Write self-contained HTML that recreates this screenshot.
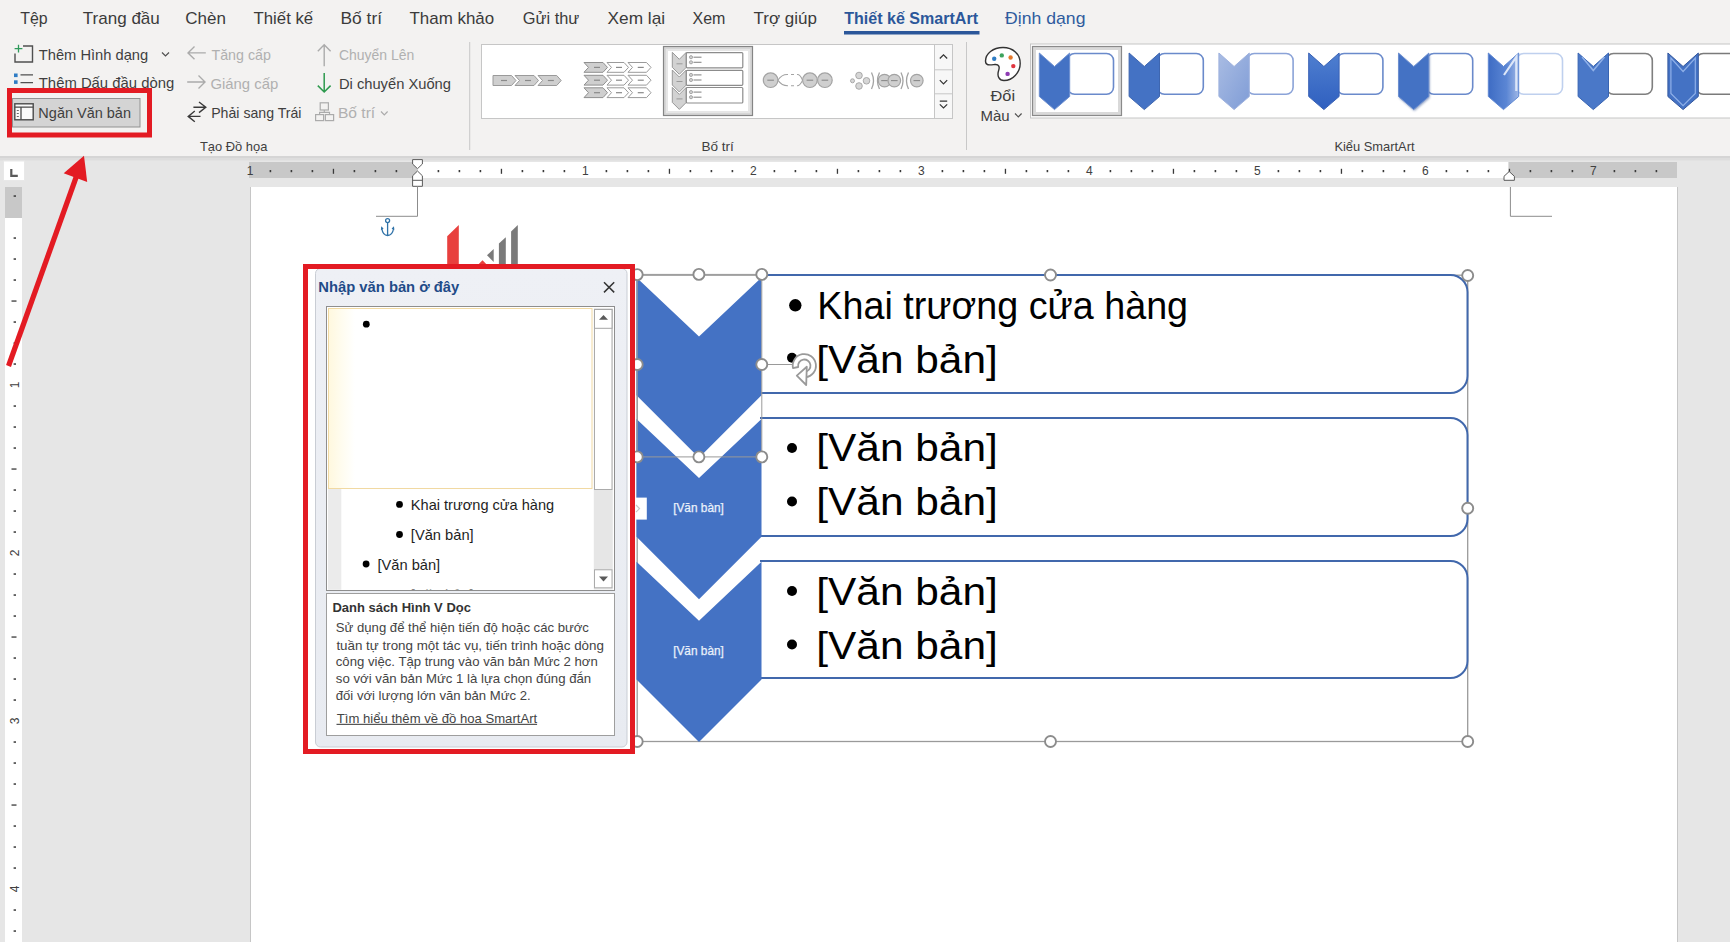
<!DOCTYPE html>
<html><head><meta charset="utf-8">
<style>
html,body{margin:0;padding:0;}
body{width:1730px;height:942px;overflow:hidden;background:#E6E6E6;position:relative;font-family:"Liberation Sans",sans-serif;}
svg{position:absolute;left:0;top:0;}
text{font-family:"Liberation Sans",sans-serif;}
</style></head><body>
<svg width="1730" height="942" viewBox="0 0 1730 942">
<!-- RIB -->
<rect x="0" y="0" width="1730" height="156" fill="#F3F2F1"/>
<g font-size="17" fill="#3B3B3B">
<text x="20.30" y="24" textLength="27.40" lengthAdjust="spacingAndGlyphs" >Tệp</text>
<text x="82.80" y="24" textLength="77.00" lengthAdjust="spacingAndGlyphs" >Trang đầu</text>
<text x="185.30" y="24" textLength="40.70" lengthAdjust="spacingAndGlyphs" >Chèn</text>
<text x="253.50" y="24" textLength="59.70" lengthAdjust="spacingAndGlyphs" >Thiết kế</text>
<text x="340.50" y="24" textLength="41.50" lengthAdjust="spacingAndGlyphs" >Bố trí</text>
<text x="409.50" y="24" textLength="84.60" lengthAdjust="spacingAndGlyphs" >Tham khảo</text>
<text x="522.80" y="24" textLength="56.50" lengthAdjust="spacingAndGlyphs" >Gửi thư</text>
<text x="607.60" y="24" textLength="57.50" lengthAdjust="spacingAndGlyphs" >Xem lại</text>
<text x="692.50" y="24" textLength="32.90" lengthAdjust="spacingAndGlyphs" >Xem</text>
<text x="753.60" y="24" textLength="63.30" lengthAdjust="spacingAndGlyphs" >Trợ giúp</text>
<text x="844.20" y="24" textLength="133.80" lengthAdjust="spacingAndGlyphs" fill="#2B579A" font-weight="bold">Thiết kế SmartArt</text>
<text x="1005.10" y="24" textLength="80.40" lengthAdjust="spacingAndGlyphs" fill="#2F5C9E">Định dạng</text>
</g>
<rect x="844" y="31" width="135.5" height="3.5" fill="#2B579A"/>
<g font-size="15" fill="#3F3F3F">
<path d="M23 46 H32.5 V62 H15 V53.5" fill="none" stroke="#505050" stroke-width="1.4"/>
<path d="M18.5 44.8 V52.6 M14.6 48.7 H22.4" stroke="#2E9A5B" stroke-width="1.3"/>
<text x="38.80" y="59.7" textLength="109.40" lengthAdjust="spacingAndGlyphs" >Thêm Hình dạng</text>
<path d="M162 52.5 L165.5 56 L169 52.5" fill="none" stroke="#505050" stroke-width="1.2"/>
<rect x="14" y="73.5" width="3.6" height="3.6" fill="#2F7CC4"/>
<rect x="14" y="80.3" width="3.6" height="3.6" fill="#2F7CC4"/>
<path d="M20.5 74.9 H33 M20.5 82.6 H33" stroke="#505050" stroke-width="1.4"/>
<text x="38.80" y="88" textLength="135.40" lengthAdjust="spacingAndGlyphs" >Thêm Dấu đầu dòng</text>
<rect x="12.5" y="98.5" width="127.5" height="28.5" fill="#D4D4D4" stroke="#929292" stroke-width="1"/>
<rect x="14.8" y="103.8" width="18.4" height="16" fill="#FAFAFA" stroke="#4A4A4A" stroke-width="1.4"/>
<path d="M14.8 107.2 H33.2 M21 107.2 V119.8" stroke="#4A4A4A" stroke-width="1.3"/>
<path d="M16.8 110.5 H18.8 M16.8 113.5 H18.8 M16.8 116.5 H18.8" stroke="#6A6A6A" stroke-width="1.2"/>
<text x="38.36" y="118" textLength="92.64" lengthAdjust="spacingAndGlyphs" >Ngăn Văn bản</text>
</g>
<g font-size="15" fill="#B0B0B0">
<path d="M205.8 52.9 H188 M194.5 46.5 L188 52.9 L194.5 59.3" fill="none" stroke="#ABABAB" stroke-width="1.4"/>
<text x="211.50" y="59.6" textLength="59.40" lengthAdjust="spacingAndGlyphs" >Tăng cấp</text>
<path d="M187.2 82 H205 M198.5 75.6 L205 82 L198.5 88.4" fill="none" stroke="#ABABAB" stroke-width="1.4"/>
<text x="210.50" y="88.7" textLength="67.70" lengthAdjust="spacingAndGlyphs" >Giáng cấp</text>
<path d="M193.4 107.3 H205.8 M199 102 L205.8 107.3 L199 112.6 M200.5 116.4 H188.2 M194.8 111 L188.2 116.4 L194.8 121.8" fill="none" stroke="#3A3A3A" stroke-width="1.4"/>
<text x="211.20" y="117.8" textLength="90.28" lengthAdjust="spacingAndGlyphs" fill="#3F3F3F">Phải sang Trái</text>
<path d="M324.2 66.3 V45 M317.8 51.2 L324.2 44.8 L330.6 51.2" fill="none" stroke="#ABABAB" stroke-width="1.4"/>
<text x="338.90" y="59.6" textLength="75.30" lengthAdjust="spacingAndGlyphs" >Chuyển Lên</text>
<path d="M324.2 73 V92 M317.8 85.6 L324.2 92 L330.6 85.6" fill="none" stroke="#2E9A4E" stroke-width="1.5"/>
<text x="338.90" y="88.7" textLength="112.10" lengthAdjust="spacingAndGlyphs" fill="#3F3F3F">Di chuyển Xuống</text>
<rect x="320.2" y="102.8" width="8.2" height="7.2" fill="none" stroke="#ABABAB" stroke-width="1.2"/>
<rect x="315.6" y="114.6" width="8" height="6" fill="none" stroke="#ABABAB" stroke-width="1.2"/>
<rect x="325.4" y="114.6" width="8.2" height="6" fill="none" stroke="#ABABAB" stroke-width="1.2"/>
<path d="M324.3 110 V112.3 M319.6 114.6 V112.3 H329.5 V114.6" fill="none" stroke="#ABABAB" stroke-width="1.2"/>
<text x="337.90" y="117.8" textLength="37.30" lengthAdjust="spacingAndGlyphs" >Bố trí</text>
<path d="M381 111.5 L384.3 114.8 L387.6 111.5" fill="none" stroke="#ABABAB" stroke-width="1.2"/>
</g>
<text x="199.90" y="150.9" textLength="67.50" lengthAdjust="spacingAndGlyphs" font-size="13" fill="#3F3F3F">Tạo Đồ họa</text>
<rect x="469.2" y="42" width="1" height="108" fill="#C8C8C8"/>
<!-- /RIB -->
<!-- GALLERY -->
<rect x="481.5" y="44.5" width="471" height="74" fill="#FFFFFF" stroke="#C6C6C6" stroke-width="1"/>
<rect x="934.5" y="44.5" width="18" height="74" fill="#F7F7F7" stroke="#C6C6C6" stroke-width="1"/>
<path d="M934.5 69.8 H952.5 M934.5 93.8 H952.5" stroke="#C6C6C6" stroke-width="1"/>
<path d="M939.8 58.5 L943.5 54.8 L947.2 58.5" fill="none" stroke="#333" stroke-width="1.2"/>
<path d="M939.8 80.2 L943.5 83.9 L947.2 80.2" fill="none" stroke="#333" stroke-width="1.2"/>
<path d="M939.8 101.2 H947.2 M939.8 104.3 L943.5 108 L947.2 104.3" fill="none" stroke="#333" stroke-width="1.2"/>
<path d="M493 75.5 H511.5 L516 80.5 L511.5 85.5 H493 Z" fill="#CFCFCF" stroke="#9A9A9A" stroke-width="1"/><path d="M501.0 80.5 h6" stroke="#8A8A8A" stroke-width="1.2"/>
<path d="M515.0 75.5 H534.0 L538.5 80.5 L534.0 85.5 H515.0 L519.5 80.5 Z" fill="#CFCFCF" stroke="#9A9A9A" stroke-width="1"/><path d="M525.0 80.5 h6" stroke="#8A8A8A" stroke-width="1.2"/>
<path d="M538.0 75.5 H556.7 L561.2 80.5 L556.7 85.5 H538.0 L542.5 80.5 Z" fill="#CFCFCF" stroke="#9A9A9A" stroke-width="1"/><path d="M547.85 80.5 h6" stroke="#8A8A8A" stroke-width="1.2"/>
<path d="M584.0 62.5 H603.0 L607.5 67.4 L603.0 72.3 H584.0 L588.5 67.4 Z" fill="#CFCFCF" stroke="#8F8F8F" stroke-width="1"/><path d="M594.0 67.4 h6" stroke="#8A8A8A" stroke-width="1.2"/>
<path d="M607.0 62.5 H624.0 L628.5 67.4 L624.0 72.3 H607.0 L611.5 67.4 Z" fill="#FFFFFF" stroke="#9A9A9A" stroke-width="1"/><path d="M616.0 67.4 h6" stroke="#8A8A8A" stroke-width="1.2"/>
<path d="M628.0 62.5 H646.5 L651.0 67.4 L646.5 72.3 H628.0 L632.5 67.4 Z" fill="#FFFFFF" stroke="#9A9A9A" stroke-width="1"/><path d="M637.75 67.4 h6" stroke="#8A8A8A" stroke-width="1.2"/>
<path d="M584.0 75.3 H603.0 L607.5 80.2 L603.0 85.1 H584.0 L588.5 80.2 Z" fill="#CFCFCF" stroke="#8F8F8F" stroke-width="1"/><path d="M594.0 80.2 h6" stroke="#8A8A8A" stroke-width="1.2"/>
<path d="M607.0 75.3 H624.0 L628.5 80.2 L624.0 85.1 H607.0 L611.5 80.2 Z" fill="#FFFFFF" stroke="#9A9A9A" stroke-width="1"/><path d="M616.0 80.2 h6" stroke="#8A8A8A" stroke-width="1.2"/>
<path d="M628.0 75.3 H646.5 L651.0 80.2 L646.5 85.1 H628.0 L632.5 80.2 Z" fill="#FFFFFF" stroke="#9A9A9A" stroke-width="1"/><path d="M637.75 80.2 h6" stroke="#8A8A8A" stroke-width="1.2"/>
<path d="M584.0 87.8 H603.0 L607.5 92.7 L603.0 97.6 H584.0 L588.5 92.7 Z" fill="#CFCFCF" stroke="#8F8F8F" stroke-width="1"/><path d="M594.0 92.7 h6" stroke="#8A8A8A" stroke-width="1.2"/>
<path d="M607.0 87.8 H624.0 L628.5 92.7 L624.0 97.6 H607.0 L611.5 92.7 Z" fill="#FFFFFF" stroke="#9A9A9A" stroke-width="1"/><path d="M616.0 92.7 h6" stroke="#8A8A8A" stroke-width="1.2"/>
<path d="M628.0 87.8 H646.5 L651.0 92.7 L646.5 97.6 H628.0 L632.5 92.7 Z" fill="#FFFFFF" stroke="#9A9A9A" stroke-width="1"/><path d="M637.75 92.7 h6" stroke="#8A8A8A" stroke-width="1.2"/>
<rect x="663.5" y="46.5" width="89" height="69" fill="#D6D6D6" stroke="#858585" stroke-width="1.2"/>
<rect x="668" y="51" width="80" height="60" fill="#FFFFFF" />
<rect x="667" y="50" width="82" height="62" fill="none" stroke="#E6E6E6" stroke-width="2"/>
<path d="M672.3 52.3 L679.3 59.3 L686.3 52.3 V67.3 L679.3 74.3 L672.3 67.3 Z" fill="#D2D2D2" stroke="#999" stroke-width="1"/>
<path d="M676.5 63.8 h6" stroke="#9A9A9A" stroke-width="1"/>
<rect x="686.3" y="52.6" width="56.5" height="15.199999999999996" rx="1" fill="#FFF" stroke="#8C8C8C" stroke-width="1.2"/>
<circle cx="691" cy="57.2" r="1.6" fill="#CFCFCF" stroke="#999" stroke-width="0.8"/><path d="M693.5 57.2 h8" stroke="#8A8A8A" stroke-width="1.1"/>
<circle cx="691" cy="62.300000000000004" r="1.6" fill="#CFCFCF" stroke="#999" stroke-width="0.8"/><path d="M693.5 62.300000000000004 h8" stroke="#8A8A8A" stroke-width="1.1"/>
<path d="M672.3 70.0 L679.3 77.0 L686.3 70.0 V85.0 L679.3 92.0 L672.3 85.0 Z" fill="#D2D2D2" stroke="#999" stroke-width="1"/>
<path d="M676.5 81.5 h6" stroke="#9A9A9A" stroke-width="1"/>
<rect x="686.3" y="70.3" width="56.5" height="15.0" rx="1" fill="#FFF" stroke="#8C8C8C" stroke-width="1.2"/>
<circle cx="691" cy="74.89999999999999" r="1.6" fill="#CFCFCF" stroke="#999" stroke-width="0.8"/><path d="M693.5 74.89999999999999 h8" stroke="#8A8A8A" stroke-width="1.1"/>
<circle cx="691" cy="79.99999999999999" r="1.6" fill="#CFCFCF" stroke="#999" stroke-width="0.8"/><path d="M693.5 79.99999999999999 h8" stroke="#8A8A8A" stroke-width="1.1"/>
<path d="M672.3 87.4 L679.3 94.4 L686.3 87.4 V102.4 L679.3 109.4 L672.3 102.4 Z" fill="#D2D2D2" stroke="#999" stroke-width="1"/>
<path d="M676.5 98.9 h6" stroke="#9A9A9A" stroke-width="1"/>
<rect x="686.3" y="87.5" width="56.5" height="15.5" rx="1" fill="#FFF" stroke="#8C8C8C" stroke-width="1.2"/>
<circle cx="691" cy="92.1" r="1.6" fill="#CFCFCF" stroke="#999" stroke-width="0.8"/><path d="M693.5 92.1 h8" stroke="#8A8A8A" stroke-width="1.1"/>
<circle cx="691" cy="97.19999999999999" r="1.6" fill="#CFCFCF" stroke="#999" stroke-width="0.8"/><path d="M693.5 97.19999999999999 h8" stroke="#8A8A8A" stroke-width="1.1"/>
<circle cx="770.6" cy="80.2" r="7.3" fill="#CFCFCF" stroke="#A3A3A3" stroke-width="1.2"/><path d="M767.3000000000001 80.2 h6.6" stroke="#8A8A8A" stroke-width="1.1"/>
<path d="M778 80 Q782 74 788 74.5 M778 80.4 Q782 86 788 85.8 M791 74.5 h3 M791 85.8 h3 M797 74.5 Q800 74 802.5 80 M797 85.8 Q800 86 802.5 80.4" fill="none" stroke="#A3A3A3" stroke-width="1.1"/>
<circle cx="809.9" cy="80.2" r="7.3" fill="#CFCFCF" stroke="#A3A3A3" stroke-width="1.2"/><path d="M806.6 80.2 h6.6" stroke="#8A8A8A" stroke-width="1.1"/>
<circle cx="824.9" cy="80.2" r="7.3" fill="#CFCFCF" stroke="#A3A3A3" stroke-width="1.2"/><path d="M821.6 80.2 h6.6" stroke="#8A8A8A" stroke-width="1.1"/>
<circle cx="852.5" cy="80.8" r="2" fill="#D6D6D6" stroke="#A3A3A3" stroke-width="0.9"/>
<circle cx="859" cy="75.5" r="3.3" fill="#D6D6D6" stroke="#A3A3A3" stroke-width="0.9"/>
<circle cx="859" cy="86" r="3.3" fill="#D6D6D6" stroke="#A3A3A3" stroke-width="0.9"/>
<circle cx="866.5" cy="80.8" r="3.3" fill="#D6D6D6" stroke="#A3A3A3" stroke-width="0.9"/>
<path d="M871.5 72.5 Q875.5 80.8 871.5 89 M879.5 72.5 Q875.5 80.8 879.5 89 M901 72.5 Q905 80.8 901 89 M908.5 72.5 Q904.5 80.8 908.5 89" fill="none" stroke="#A3A3A3" stroke-width="1.3"/>
<circle cx="884.5" cy="80.6" r="6.3" fill="#CFCFCF" stroke="#A3A3A3" stroke-width="1.2"/><path d="M881.2 80.6 h6.6" stroke="#8A8A8A" stroke-width="1.1"/>
<circle cx="894.3" cy="80.6" r="6.3" fill="#CFCFCF" stroke="#A3A3A3" stroke-width="1.2"/><path d="M891.0 80.6 h6.6" stroke="#8A8A8A" stroke-width="1.1"/>
<circle cx="916.8" cy="80.6" r="6.3" fill="#CFCFCF" stroke="#A3A3A3" stroke-width="1.2"/><path d="M913.5 80.6 h6.6" stroke="#8A8A8A" stroke-width="1.1"/>
<text x="701.40" y="151" textLength="32.40" lengthAdjust="spacingAndGlyphs" font-size="13" fill="#3F3F3F">Bố trí</text>
<rect x="966" y="42" width="1" height="108" fill="#C8C8C8"/>
<path d="M1003 47.5 C993 47.5 985.5 53.5 985.5 61 C985.5 66 990 65 995 64.5 C999 64.2 1000 67 998.5 71 C997 76 999 80.5 1004 80.5 C1013 80.5 1020.2 72 1020.2 63.5 C1020.2 54 1013 47.5 1003 47.5 Z" fill="#FFFFFF" stroke="#333" stroke-width="1.4"/>
<circle cx="994.2" cy="58.8" r="2.2" fill="#2F7DC4"/><circle cx="1001.8" cy="55.4" r="2.2" fill="#3DA35D"/><circle cx="1010.6" cy="57.5" r="2.2" fill="#E5792C"/><circle cx="1013.3" cy="66.1" r="2.2" fill="#E0353F"/><circle cx="1007.6" cy="73.9" r="2.2" fill="#8E3CB3"/>
<text x="990.52" y="100.7" textLength="24.60" lengthAdjust="spacingAndGlyphs" font-size="15" fill="#3F3F3F">Đổi</text>
<text x="980.40" y="121" textLength="29.20" lengthAdjust="spacingAndGlyphs" font-size="15" fill="#3F3F3F">Màu</text>
<path d="M1015 113.5 L1018.3 116.8 L1021.6 113.5" fill="none" stroke="#505050" stroke-width="1.2"/>
<rect x="1030.5" y="44" width="720" height="74" fill="#FFFFFF" stroke="#C6C6C6" stroke-width="1"/>
<rect x="1032.5" y="46.5" width="89" height="69" fill="#D9D9D9" stroke="#8A8A8A" stroke-width="1.2"/>
<rect x="1036" y="50" width="82" height="62" fill="#FFFFFF"/>
<defs><linearGradient id="lg3" x1="0" y1="0" x2="1" y2="1"><stop offset="0" stop-color="#A9BCE3"/><stop offset="1" stop-color="#7F9CD6"/></linearGradient><linearGradient id="lg4" x1="0" y1="0" x2="0" y2="1"><stop offset="0" stop-color="#4F7FD0"/><stop offset="1" stop-color="#2F5FBF"/></linearGradient><linearGradient id="lg6" x1="0" y1="0" x2="1" y2="0"><stop offset="0" stop-color="#3E6CC4"/><stop offset="0.6" stop-color="#5B86D4"/><stop offset="1" stop-color="#9FB7E6"/></linearGradient><filter id="blur1"><feGaussianBlur stdDeviation="1.2"/></filter></defs>
<rect x="1067.7" y="53.5" width="45.800000000000004" height="40.8" rx="7" fill="#FFFFFF" stroke="#6A8ACB" stroke-width="1.6"/>
<path d="M1039.3 53 L1054.5 66.5 L1069.7 53 V96.5 L1054.5 109.6 L1039.3 96.5 Z" fill="#4472C4" stroke="#6D8FD0" stroke-width="1"/>
<rect x="1157.5" y="53.5" width="45.800000000000004" height="40.8" rx="7" fill="#FFFFFF" stroke="#6A8ACB" stroke-width="1.6"/>
<path d="M1129.1 53 L1144.3 66.5 L1159.5 53 V96.5 L1144.3 109.6 L1129.1 96.5 Z" fill="#4472C4" stroke="#3E66B0" stroke-width="1"/>
<rect x="1247.3" y="53.5" width="45.800000000000004" height="40.8" rx="7" fill="#FFFFFF" stroke="#8BA3D8" stroke-width="1.6"/>
<path d="M1218.8999999999999 53 L1234.1 66.5 L1249.3 53 V96.5 L1234.1 109.6 L1218.8999999999999 96.5 Z" fill="url(#lg3)" stroke="#9FB2DE" stroke-width="1"/>
<rect x="1337.1" y="53.5" width="45.800000000000004" height="40.8" rx="7" fill="#FFFFFF" stroke="#6A8ACB" stroke-width="1.6"/>
<path d="M1308.6999999999998 53 L1323.8999999999999 66.5 L1339.1 53 V96.5 L1323.8999999999999 109.6 L1308.6999999999998 96.5 Z" fill="url(#lg4)" stroke="#3A62B5" stroke-width="1"/>
<rect x="1426.9" y="53.5" width="45.800000000000004" height="40.8" rx="7" fill="#FFFFFF" stroke="#6A8ACB" stroke-width="1.6"/>
<path d="M1398.5 53 L1413.7 66.5 L1428.9 53 V96.5 L1413.7 109.6 L1398.5 96.5 Z" fill="#2E4E8E" opacity="0.5" transform="translate(0.8,1.5)" filter="url(#blur1)"/>
<path d="M1398.5 53 L1413.7 66.5 L1428.9 53 V96.5 L1413.7 109.6 L1398.5 96.5 Z" fill="#4472C4" stroke="#6D8FD0" stroke-width="1"/>
<rect x="1516.7" y="53.5" width="45.800000000000004" height="40.8" rx="7" fill="#FFFFFF" stroke="#BFD0EE" stroke-width="1.6"/>
<path d="M1488.3 53 L1503.5 66.5 L1518.7 53 V96.5 L1503.5 109.6 L1488.3 96.5 Z" fill="url(#lg6)" stroke="#5F88D3" stroke-width="1"/>
<path d="M1504.0 75 L1516.3 57 L1516.3 91" fill="none" stroke="#DDE7F8" stroke-width="2.2"/>
<rect x="1606.5" y="53.5" width="45.800000000000004" height="40.8" rx="7" fill="#FFFFFF" stroke="#7F7F7F" stroke-width="1.6"/>
<path d="M1578.1 53 L1593.3 66.5 L1608.5 53 V96.5 L1593.3 109.6 L1578.1 96.5 Z" fill="#4A78C8" stroke="#3864B2" stroke-width="1"/>
<path d="M1582.1 57 L1593.3 70.5 L1604.5 57" fill="none" stroke="#8FB0E8" stroke-width="1.5"/>
<rect x="1696.3000000000002" y="53.5" width="45.800000000000004" height="40.8" rx="7" fill="#FFFFFF" stroke="#7A7A7A" stroke-width="1.6"/>
<path d="M1667.9 53 L1683.1000000000001 66.5 L1698.3000000000002 53 V96.5 L1683.1000000000001 109.6 L1667.9 96.5 Z" fill="#4472C4" stroke="#34589E" stroke-width="1"/>
<path d="M1670.9 58 L1683.1000000000001 71.5 L1695.3000000000002 58 V93.5 L1683.1000000000001 105.6 L1670.9 93.5 Z" fill="none" stroke="#8FB0E8" stroke-width="1.2"/>
<text x="1334.40" y="151.3" textLength="80.12" lengthAdjust="spacingAndGlyphs" font-size="13" fill="#3F3F3F">Kiểu SmartArt</text>
<!-- /GALLERY -->
<!-- DOC -->
<rect x="0" y="156" width="1730" height="2" fill="#D5D5D5"/>
<rect x="0" y="158" width="1730" height="2" fill="#DDDDDD"/>
<rect x="0" y="160" width="1730" height="1" fill="#E2E2E2"/>
<rect x="251" y="187" width="1426" height="760" fill="#FFFFFF"/>
<rect x="250" y="187" width="1" height="760" fill="#C6C6C6"/>
<rect x="1677" y="187" width="1" height="760" fill="#C6C6C6"/>
<rect x="249" y="162" width="1428" height="16" fill="#C8C8C8"/>
<rect x="417.4" y="162" width="1091" height="16" fill="#FFFFFF"/>
<rect x="269.6" y="170" width="1.6" height="2.2" fill="#3A3A3A"/>
<rect x="290.6" y="170" width="1.6" height="2.2" fill="#3A3A3A"/>
<rect x="311.6" y="170" width="1.6" height="2.2" fill="#3A3A3A"/>
<rect x="332.8" y="168.8" width="1.3" height="5" fill="#3A3A3A"/>
<rect x="353.6" y="170" width="1.6" height="2.2" fill="#3A3A3A"/>
<rect x="374.6" y="170" width="1.6" height="2.2" fill="#3A3A3A"/>
<rect x="395.6" y="170" width="1.6" height="2.2" fill="#3A3A3A"/>
<rect x="437.6" y="170" width="1.6" height="2.2" fill="#3A3A3A"/>
<rect x="458.6" y="170" width="1.6" height="2.2" fill="#3A3A3A"/>
<rect x="479.6" y="170" width="1.6" height="2.2" fill="#3A3A3A"/>
<rect x="500.8" y="168.8" width="1.3" height="5" fill="#3A3A3A"/>
<rect x="521.6" y="170" width="1.6" height="2.2" fill="#3A3A3A"/>
<rect x="542.6" y="170" width="1.6" height="2.2" fill="#3A3A3A"/>
<rect x="563.6" y="170" width="1.6" height="2.2" fill="#3A3A3A"/>
<rect x="605.6" y="170" width="1.6" height="2.2" fill="#3A3A3A"/>
<rect x="626.6" y="170" width="1.6" height="2.2" fill="#3A3A3A"/>
<rect x="647.6" y="170" width="1.6" height="2.2" fill="#3A3A3A"/>
<rect x="668.8" y="168.8" width="1.3" height="5" fill="#3A3A3A"/>
<rect x="689.6" y="170" width="1.6" height="2.2" fill="#3A3A3A"/>
<rect x="710.6" y="170" width="1.6" height="2.2" fill="#3A3A3A"/>
<rect x="731.6" y="170" width="1.6" height="2.2" fill="#3A3A3A"/>
<rect x="773.6" y="170" width="1.6" height="2.2" fill="#3A3A3A"/>
<rect x="794.6" y="170" width="1.6" height="2.2" fill="#3A3A3A"/>
<rect x="815.6" y="170" width="1.6" height="2.2" fill="#3A3A3A"/>
<rect x="836.8" y="168.8" width="1.3" height="5" fill="#3A3A3A"/>
<rect x="857.6" y="170" width="1.6" height="2.2" fill="#3A3A3A"/>
<rect x="878.6" y="170" width="1.6" height="2.2" fill="#3A3A3A"/>
<rect x="899.6" y="170" width="1.6" height="2.2" fill="#3A3A3A"/>
<rect x="941.6" y="170" width="1.6" height="2.2" fill="#3A3A3A"/>
<rect x="962.6" y="170" width="1.6" height="2.2" fill="#3A3A3A"/>
<rect x="983.6" y="170" width="1.6" height="2.2" fill="#3A3A3A"/>
<rect x="1004.8" y="168.8" width="1.3" height="5" fill="#3A3A3A"/>
<rect x="1025.6" y="170" width="1.6" height="2.2" fill="#3A3A3A"/>
<rect x="1046.6" y="170" width="1.6" height="2.2" fill="#3A3A3A"/>
<rect x="1067.6" y="170" width="1.6" height="2.2" fill="#3A3A3A"/>
<rect x="1109.6" y="170" width="1.6" height="2.2" fill="#3A3A3A"/>
<rect x="1130.6" y="170" width="1.6" height="2.2" fill="#3A3A3A"/>
<rect x="1151.6" y="170" width="1.6" height="2.2" fill="#3A3A3A"/>
<rect x="1172.8" y="168.8" width="1.3" height="5" fill="#3A3A3A"/>
<rect x="1193.6" y="170" width="1.6" height="2.2" fill="#3A3A3A"/>
<rect x="1214.6" y="170" width="1.6" height="2.2" fill="#3A3A3A"/>
<rect x="1235.6" y="170" width="1.6" height="2.2" fill="#3A3A3A"/>
<rect x="1277.6" y="170" width="1.6" height="2.2" fill="#3A3A3A"/>
<rect x="1298.6" y="170" width="1.6" height="2.2" fill="#3A3A3A"/>
<rect x="1319.6" y="170" width="1.6" height="2.2" fill="#3A3A3A"/>
<rect x="1340.8" y="168.8" width="1.3" height="5" fill="#3A3A3A"/>
<rect x="1361.6" y="170" width="1.6" height="2.2" fill="#3A3A3A"/>
<rect x="1382.6" y="170" width="1.6" height="2.2" fill="#3A3A3A"/>
<rect x="1403.6" y="170" width="1.6" height="2.2" fill="#3A3A3A"/>
<rect x="1445.6" y="170" width="1.6" height="2.2" fill="#3A3A3A"/>
<rect x="1466.6" y="170" width="1.6" height="2.2" fill="#3A3A3A"/>
<rect x="1487.6" y="170" width="1.6" height="2.2" fill="#3A3A3A"/>
<rect x="1508.8" y="168.8" width="1.3" height="5" fill="#3A3A3A"/>
<rect x="1529.6" y="170" width="1.6" height="2.2" fill="#3A3A3A"/>
<rect x="1550.6" y="170" width="1.6" height="2.2" fill="#3A3A3A"/>
<rect x="1571.6" y="170" width="1.6" height="2.2" fill="#3A3A3A"/>
<rect x="1613.6" y="170" width="1.6" height="2.2" fill="#3A3A3A"/>
<rect x="1634.6" y="170" width="1.6" height="2.2" fill="#3A3A3A"/>
<rect x="1655.6" y="170" width="1.6" height="2.2" fill="#3A3A3A"/>
<g font-size="12" fill="#404040" text-anchor="middle">
<text x="250" y="175">1</text>
<text x="585.4" y="175">1</text>
<text x="753.4" y="175">2</text>
<text x="921.4" y="175">3</text>
<text x="1089.4" y="175">4</text>
<text x="1257.4" y="175">5</text>
<text x="1425.4" y="175">6</text>
<text x="1593.4" y="175">7</text>
</g>
<path d="M412.6 159.6 H422.4 V164 L417.5 168.7 L412.6 164 Z" fill="#FFFFFF" stroke="#5A5A5A" stroke-width="1"/>
<path d="M417.5 171 L422.4 175.8 V186.3 H412.6 V175.8 Z" fill="#FFFFFF" stroke="#5A5A5A" stroke-width="1"/>
<path d="M412.6 180.3 H422.4" stroke="#5A5A5A" stroke-width="1"/>
<path d="M1509.2 171.5 L1514.4 176.3 V180.3 H1504 V176.3 Z" fill="#FFFFFF" stroke="#5A5A5A" stroke-width="1"/>
<path d="M417.5 186.3 V216.3 H376" fill="none" stroke="#8C8C8C" stroke-width="1"/>
<path d="M1510.4 187 V216.3 H1552" fill="none" stroke="#8C8C8C" stroke-width="1"/>
<rect x="3.5" y="161" width="21" height="19.5" fill="#FFFFFF" stroke="#E8E8E8" stroke-width="1"/>
<path d="M11.3 169 V175.8 H17.8" fill="none" stroke="#5A5A5A" stroke-width="2.2"/>
<rect x="5" y="187" width="17" height="760" fill="#FFFFFF"/>
<rect x="5" y="187" width="17" height="31" fill="#C8C8C8"/>
<rect x="13.6" y="195.3" width="2.4" height="1.5" fill="#3A3A3A"/>
<rect x="13.6" y="237.3" width="2.4" height="1.5" fill="#3A3A3A"/>
<rect x="13.6" y="258.3" width="2.4" height="1.5" fill="#3A3A3A"/>
<rect x="13.6" y="279.3" width="2.4" height="1.5" fill="#3A3A3A"/>
<rect x="11.5" y="300.4" width="5" height="1.3" fill="#3A3A3A"/>
<rect x="13.6" y="321.3" width="2.4" height="1.5" fill="#3A3A3A"/>
<rect x="13.6" y="342.3" width="2.4" height="1.5" fill="#3A3A3A"/>
<rect x="13.6" y="363.3" width="2.4" height="1.5" fill="#3A3A3A"/>
<rect x="13.6" y="405.3" width="2.4" height="1.5" fill="#3A3A3A"/>
<rect x="13.6" y="426.3" width="2.4" height="1.5" fill="#3A3A3A"/>
<rect x="13.6" y="447.3" width="2.4" height="1.5" fill="#3A3A3A"/>
<rect x="11.5" y="468.4" width="5" height="1.3" fill="#3A3A3A"/>
<rect x="13.6" y="489.3" width="2.4" height="1.5" fill="#3A3A3A"/>
<rect x="13.6" y="510.3" width="2.4" height="1.5" fill="#3A3A3A"/>
<rect x="13.6" y="531.3" width="2.4" height="1.5" fill="#3A3A3A"/>
<rect x="13.6" y="573.3" width="2.4" height="1.5" fill="#3A3A3A"/>
<rect x="13.6" y="594.3" width="2.4" height="1.5" fill="#3A3A3A"/>
<rect x="13.6" y="615.3" width="2.4" height="1.5" fill="#3A3A3A"/>
<rect x="11.5" y="636.4" width="5" height="1.3" fill="#3A3A3A"/>
<rect x="13.6" y="657.3" width="2.4" height="1.5" fill="#3A3A3A"/>
<rect x="13.6" y="678.3" width="2.4" height="1.5" fill="#3A3A3A"/>
<rect x="13.6" y="699.3" width="2.4" height="1.5" fill="#3A3A3A"/>
<rect x="13.6" y="741.3" width="2.4" height="1.5" fill="#3A3A3A"/>
<rect x="13.6" y="762.3" width="2.4" height="1.5" fill="#3A3A3A"/>
<rect x="13.6" y="783.3" width="2.4" height="1.5" fill="#3A3A3A"/>
<rect x="11.5" y="804.4" width="5" height="1.3" fill="#3A3A3A"/>
<rect x="13.6" y="825.3" width="2.4" height="1.5" fill="#3A3A3A"/>
<rect x="13.6" y="846.3" width="2.4" height="1.5" fill="#3A3A3A"/>
<rect x="13.6" y="867.3" width="2.4" height="1.5" fill="#3A3A3A"/>
<rect x="13.6" y="909.3" width="2.4" height="1.5" fill="#3A3A3A"/>
<rect x="13.6" y="930.3" width="2.4" height="1.5" fill="#3A3A3A"/>
<g font-size="12" fill="#404040" text-anchor="middle">
<text transform="translate(18.5 385) rotate(-90)" x="0" y="0">1</text>
<text transform="translate(18.5 553) rotate(-90)" x="0" y="0">2</text>
<text transform="translate(18.5 721) rotate(-90)" x="0" y="0">3</text>
<text transform="translate(18.5 889) rotate(-90)" x="0" y="0">4</text>
</g>
<g fill="none" stroke="#2F72A8" stroke-width="1.3"><circle cx="387.6" cy="220.6" r="2"/><path d="M387.6 222.6 V235.5 M381.8 228.5 Q382.8 235.5 387.6 235.5 Q392.4 235.5 393.6 228.5"/></g>
<path d="M381.2 226.3 L380.9 230.2 L383.6 228.6 Z M394 226.3 L394.3 230.2 L391.6 228.6 Z" fill="#2F72A8"/>
<path d="M447.2 236.2 L458.8 225 V264 H447.2 Z" fill="#E8403E"/>
<path d="M487 255.3 L493.7 248.9 V261.9 Z" fill="#7A7A7A"/>
<path d="M498.9 243.4 L505.8 237.3 V264 H498.9 Z" fill="#7A7A7A"/>
<path d="M511.1 231.4 L517.8 225 V264 H511.1 Z" fill="#7A7A7A"/>
<path d="M478.8 264 L482.5 260.2 L486.2 264 Z" fill="#E8403E"/>
<!-- /DOC -->
<!-- SA -->
<rect x="637.2" y="275.2" width="830.5" height="466.3" fill="none" stroke="#9A9A9A" stroke-width="1.3"/>
<path d="M760 275 H1450.5 A17 17 0 0 1 1467.5 292 V376 A17 17 0 0 1 1450.5 393 H760" fill="#FFFFFF" stroke="#4168AC" stroke-width="2"/>
<path d="M760 418 H1450.5 A17 17 0 0 1 1467.5 435 V519 A17 17 0 0 1 1450.5 536 H760" fill="#FFFFFF" stroke="#4168AC" stroke-width="2"/>
<path d="M760 561 H1450.5 A17 17 0 0 1 1467.5 578 V661 A17 17 0 0 1 1450.5 678 H760" fill="#FFFFFF" stroke="#4168AC" stroke-width="2"/>
<path d="M636.5 277.5 L699 336.5 L761.5 277.5 V395.3 L699 457.8 L636.5 395.3 Z" fill="#4472C4"/>
<path d="M636.5 419 L699 478 L761.5 419 V536.8 L699 599.3 L636.5 536.8 Z" fill="#4472C4"/>
<path d="M636.5 561.7 L699 620.7 L761.5 561.7 V679.5 L699 742.0 L636.5 679.5 Z" fill="#4472C4"/>
<rect x="637.2" y="274.4" width="124.6" height="182.5" fill="none" stroke="#9A9A9A" stroke-width="1"/>
<path d="M761.8 364.5 H792" stroke="#9A9A9A" stroke-width="1"/>
<g font-size="12" fill="#FFFFFF">
<text x="673.18" y="511.5" textLength="50.70" lengthAdjust="spacingAndGlyphs" font-size="12.5" stroke="#EAF1FB" stroke-width="0.25" fill="#EAF1FB">[Văn bàn]</text>
<text x="673.18" y="654.5" textLength="50.70" lengthAdjust="spacingAndGlyphs" font-size="12.5" stroke="#EAF1FB" stroke-width="0.25" fill="#EAF1FB">[Văn bàn]</text>
</g>
<g font-size="38" fill="#000000">
<text x="817.34" y="319.2" textLength="370.76" lengthAdjust="spacingAndGlyphs" >Khai trương cửa hàng</text>
<text x="816.32" y="373" textLength="181.48" lengthAdjust="spacingAndGlyphs" >[Văn bản]</text>
<text x="816.32" y="461" textLength="181.48" lengthAdjust="spacingAndGlyphs" >[Văn bản]</text>
<text x="816.32" y="515" textLength="181.48" lengthAdjust="spacingAndGlyphs" >[Văn bản]</text>
<text x="816.32" y="605" textLength="181.48" lengthAdjust="spacingAndGlyphs" >[Văn bản]</text>
<text x="816.32" y="659" textLength="181.48" lengthAdjust="spacingAndGlyphs" >[Văn bản]</text>
</g>
<circle cx="795.3" cy="305.3" r="6.2" fill="#000"/>
<circle cx="792" cy="357.8" r="5" fill="#000"/>
<circle cx="792" cy="448" r="5" fill="#000"/>
<circle cx="792" cy="501.5" r="5" fill="#000"/>
<circle cx="792" cy="591" r="5" fill="#000"/>
<circle cx="792" cy="644.5" r="5" fill="#000"/>
<g fill="#FFFFFF" stroke="#9A9A9A" stroke-width="1.8" stroke-linejoin="round"><path d="M793.0 368.1 A11.6 11.6 0 1 1 805.5 377.2 L804.9 371.9 A6.2 6.2 0 1 0 798.2 367.0 Z"/><path d="M806.8 366.8 L806.2 385 L796.8 375.6 Z"/></g>
<circle cx="637.2" cy="274.6" r="5.5" fill="#FFFFFF" stroke="#8C8C8C" stroke-width="1.9"/>
<circle cx="698.9" cy="274.4" r="5.5" fill="#FFFFFF" stroke="#8C8C8C" stroke-width="1.9"/>
<circle cx="761.8" cy="274.4" r="5.5" fill="#FFFFFF" stroke="#8C8C8C" stroke-width="1.9"/>
<circle cx="1050.5" cy="275" r="5.5" fill="#FFFFFF" stroke="#8C8C8C" stroke-width="1.9"/>
<circle cx="1467.7" cy="275.5" r="5.5" fill="#FFFFFF" stroke="#8C8C8C" stroke-width="1.9"/>
<circle cx="637.2" cy="364.5" r="5.5" fill="#FFFFFF" stroke="#8C8C8C" stroke-width="1.9"/>
<circle cx="761.8" cy="364.5" r="5.5" fill="#FFFFFF" stroke="#8C8C8C" stroke-width="1.9"/>
<circle cx="637.2" cy="456.9" r="5.5" fill="#FFFFFF" stroke="#8C8C8C" stroke-width="1.9"/>
<circle cx="698.9" cy="456.9" r="5.5" fill="#FFFFFF" stroke="#8C8C8C" stroke-width="1.9"/>
<circle cx="761.8" cy="456.9" r="5.5" fill="#FFFFFF" stroke="#8C8C8C" stroke-width="1.9"/>
<circle cx="1467.7" cy="508.2" r="5.5" fill="#FFFFFF" stroke="#8C8C8C" stroke-width="1.9"/>
<circle cx="637.2" cy="741.5" r="5.5" fill="#FFFFFF" stroke="#8C8C8C" stroke-width="1.9"/>
<circle cx="1050.5" cy="741.5" r="5.5" fill="#FFFFFF" stroke="#8C8C8C" stroke-width="1.9"/>
<circle cx="1467.7" cy="741.5" r="5.5" fill="#FFFFFF" stroke="#8C8C8C" stroke-width="1.9"/>
<circle cx="637.2" cy="508.2" r="5.5" fill="#FFFFFF" stroke="#8C8C8C" stroke-width="1.9"/>
<rect x="634.8" y="497.6" width="12" height="22" fill="#FFFFFF"/>
<path d="M636 505 L639.5 508.6 L636 512.2" fill="none" stroke="#C8C8C8" stroke-width="1.2"/>
<!-- /SA -->
<!-- PANE -->
<rect x="303" y="264" width="332" height="490" fill="#FFFFFF"/>
<defs><linearGradient id="pg" x1="0" y1="0" x2="0" y2="1"><stop offset="0" stop-color="#EEF0F5"/><stop offset="1" stop-color="#E8EBF1"/></linearGradient><linearGradient id="yg" x1="0" y1="0" x2="1" y2="0"><stop offset="0" stop-color="#FFF8DE"/><stop offset="0.05" stop-color="#FFFCEF"/><stop offset="0.1" stop-color="#FFFFFF"/><stop offset="1" stop-color="#FFFFFF"/></linearGradient></defs>
<rect x="315.5" y="268.5" width="311.5" height="478.5" rx="5" fill="url(#pg)" stroke="#C9CDD4" stroke-width="1"/>
<text x="318.30" y="292" textLength="141.00" lengthAdjust="spacingAndGlyphs" font-size="15" font-weight="bold" fill="#1F4B88">Nhập văn bản ở đây</text>
<path d="M604 282.2 L614.2 292.4 M614.2 282.2 L604 292.4" stroke="#333" stroke-width="1.5"/>
<rect x="326.5" y="306.5" width="288" height="284" fill="#FFFFFF" stroke="#8E8E8E" stroke-width="1"/>
<rect x="328" y="489" width="13.3" height="100.8" fill="#EBEBEB"/>
<rect x="328.5" y="308.5" width="263.5" height="180" fill="url(#yg)" stroke="#F1D9A2" stroke-width="1"/>
<circle cx="366.3" cy="324.2" r="3.4" fill="#000"/>
<clipPath id="tac"><rect x="328" y="308" width="265" height="281.5"/></clipPath>
<g font-size="15" fill="#1E1E1E" clip-path="url(#tac)">
<circle cx="399.5" cy="504.4" r="3.4" fill="#000"/>
<text x="410.82" y="510" textLength="143.40" lengthAdjust="spacingAndGlyphs" >Khai trương cửa hàng</text>
<circle cx="399.5" cy="534.5" r="3.4" fill="#000"/>
<text x="410.82" y="540" textLength="62.86" lengthAdjust="spacingAndGlyphs" >[Văn bản]</text>
<circle cx="366.1" cy="564" r="3.4" fill="#000"/>
<text x="377.40" y="570" textLength="62.80" lengthAdjust="spacingAndGlyphs" >[Văn bản]</text>
<text x="410.82" y="600" textLength="62.86" lengthAdjust="spacingAndGlyphs" >[Văn bản]</text>
</g>
<rect x="593.8" y="308" width="19" height="281.5" fill="#E6E6E6"/>
<rect x="594.5" y="309.5" width="17.5" height="180" fill="#FFFFFF" stroke="#ABABAB" stroke-width="1"/>
<rect x="594.5" y="309.5" width="17.5" height="18.8" fill="#FFFFFF" stroke="#A6A6A6" stroke-width="1"/>
<path d="M599 319.8 L603.5 314.9 L608 319.8 Z" fill="#5A5A5A"/>
<rect x="594.5" y="569.8" width="17.5" height="18" fill="#FFFFFF" stroke="#ABABAB" stroke-width="1"/>
<path d="M599 576.5 L603.5 581.4 L608 576.5 Z" fill="#5A5A5A"/>
<rect x="326.5" y="593.5" width="288" height="142" fill="#FFFFFF" stroke="#9E9E9E" stroke-width="1"/>
<text x="332.40" y="611.5" textLength="138.54" lengthAdjust="spacingAndGlyphs" font-size="13" font-weight="bold" fill="#333">Danh sách Hình V Dọc</text>
<g font-size="13" fill="#444">
<text x="335.80" y="632.3" textLength="253.14" lengthAdjust="spacingAndGlyphs" >Sử dụng để thể hiện tiến độ hoặc các bước</text>
<text x="336.40" y="649.6" textLength="267.50" lengthAdjust="spacingAndGlyphs" >tuần tự trong một tác vụ, tiến trình hoặc dòng</text>
<text x="335.80" y="666.4" textLength="261.94" lengthAdjust="spacingAndGlyphs" >công việc. Tập trung vào văn bản Mức 2 hơn</text>
<text x="335.80" y="683.2" textLength="255.42" lengthAdjust="spacingAndGlyphs" >so với văn bản Mức 1 là lựa chọn đúng đắn</text>
<text x="335.80" y="700" textLength="194.78" lengthAdjust="spacingAndGlyphs" >đối với lượng lớn văn bản Mức 2.</text>
<text x="336.80" y="722.5" textLength="200.36" lengthAdjust="spacingAndGlyphs" >Tìm hiểu thêm về đồ hoa SmartArt</text>
<rect x="336.5" y="723.8" width="200.6" height="1.1" fill="#444"/>
</g>
<!-- /PANE -->
<!-- OVL -->
<rect x="305.5" y="266.5" width="327" height="485" fill="none" stroke="#E31B23" stroke-width="5"/>
<rect x="9.5" y="90.5" width="140" height="44.5" fill="none" stroke="#E31B23" stroke-width="5"/>
<path d="M8.5 366 L78 172" stroke="#E31B23" stroke-width="5.2" stroke-linecap="butt"/>
<path d="M84 155.8 L63.7 173.2 L87.2 182 Z" fill="#E31B23"/>
<!-- /OVL -->
</svg>
</body></html>
